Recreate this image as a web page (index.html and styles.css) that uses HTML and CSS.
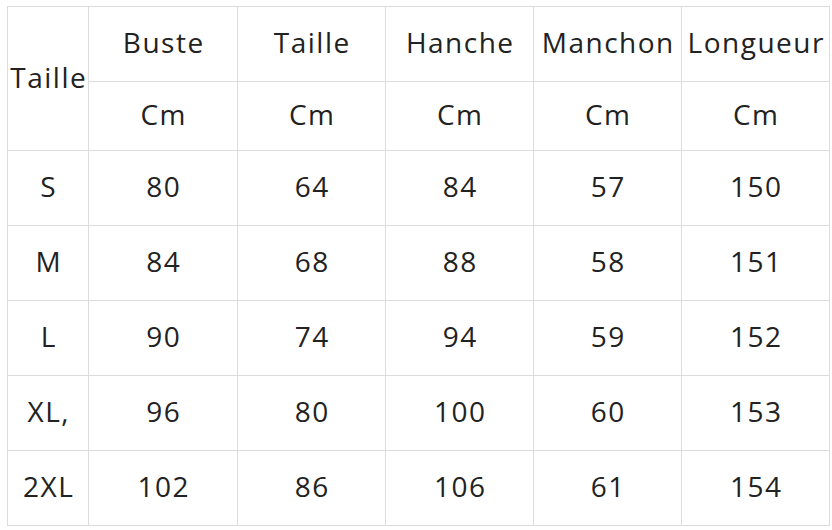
FILE: index.html
```html
<!DOCTYPE html>
<html>
<head>
<meta charset="utf-8">
<link rel="stylesheet" href="styles.css">
</head>
<body>
<table class="size-table">
  <colgroup>
    <col class="col-first">
    <col class="col-a">
    <col class="col-b">
    <col class="col-b">
    <col class="col-b">
    <col class="col-b">
  </colgroup>
  <tr class="row-head">
    <td rowspan="2">Taille</td>
    <td>Buste</td>
    <td>Taille</td>
    <td>Hanche</td>
    <td>Manchon</td>
    <td>Longueur</td>
  </tr>
  <tr class="row-unit">
    <td>Cm</td><td>Cm</td><td>Cm</td><td>Cm</td><td>Cm</td>
  </tr>
  <tr class="row-data"><td>S</td><td>80</td><td>64</td><td>84</td><td>57</td><td>150</td></tr>
  <tr class="row-data"><td>M</td><td>84</td><td>68</td><td>88</td><td>58</td><td>151</td></tr>
  <tr class="row-data"><td>L</td><td>90</td><td>74</td><td>94</td><td>59</td><td>152</td></tr>
  <tr class="row-data"><td>XL,</td><td>96</td><td>80</td><td>100</td><td>60</td><td>153</td></tr>
  <tr class="row-data"><td>2XL</td><td>102</td><td>86</td><td>106</td><td>61</td><td>154</td></tr>
</table>
</body>
</html>
```

FILE: styles.css
```css
html, body {
  margin: 0;
  padding: 0;
  background: #ffffff;
}
body {
  padding: 6px 0 0 7px;
  font-family: "Open Sans", "Liberation Sans", sans-serif;
  color: #222222;
}
.size-table {
  border-collapse: collapse;
  table-layout: fixed;
  width: 821px;
}
.col-first { width: 81px; }
.col-a { width: 149px; }
.col-b { width: 148px; }
.size-table td {
  border: 1px solid #dcdcdc;
  padding: 0 0 4px 1.5px;
  text-align: center;
  vertical-align: middle;
  font-size: 28px;
  line-height: 36px;
  letter-spacing: 1.5px;
  white-space: nowrap;
  overflow: visible;
}
.row-head td { height: 70px; }
.row-unit td { height: 64px; }
.row-data td { height: 70px; }
```
